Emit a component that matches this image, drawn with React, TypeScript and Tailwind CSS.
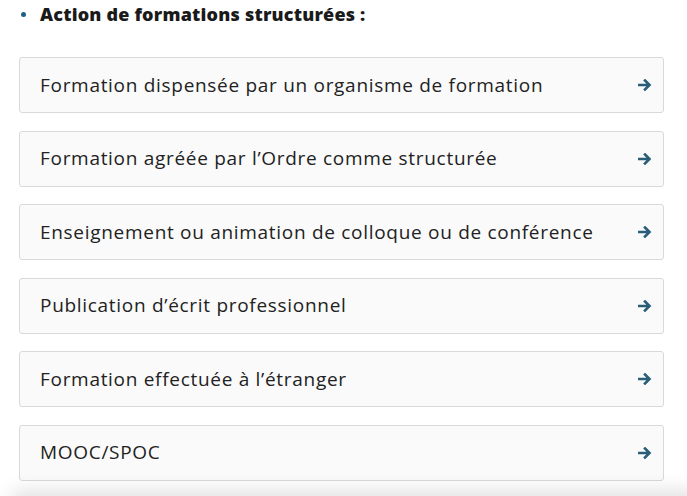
const items = [
  "Formation dispensée par un organisme de formation",
  "Formation agréée par l’Ordre comme structurée",
  "Enseignement ou animation de colloque ou de conférence",
  "Publication d’écrit professionnel",
  "Formation effectuée à l’étranger",
  "MOOC/SPOC",
]

function Arrow() {
  return (
    <svg width="14" height="12" viewBox="0 0 14 12" className="shrink-0">
      <path d="M1 6h10M7 1.5 11.5 6 7 10.5" fill="none" stroke="#2a5d78" strokeWidth="2.6" strokeLinecap="square" />
    </svg>
  )
}

export default function App() {
  return (
    <div className="relative h-[496px] w-[687px] overflow-hidden bg-white" style={{ fontFamily: "'Open Sans', sans-serif" }}>
      <div className="flex items-center pl-[21px] pt-[2px] h-[26px]">
        <span className="w-[5px] h-[5px] rounded-full bg-[#1f5f86]" />
        <span className="ml-[14px] text-[18px] font-extrabold tracking-[0.2px] text-[#1a1a1a]">Action de formations structurées :</span>
      </div>

      <div className="mt-[31px] ml-[19px] w-[645px] flex flex-col gap-[17.5px]">
        {items.map((label) => (
          <button
            key={label}
            className="flex h-[56px] items-center justify-between rounded-[3px] border border-[#d9d9d9] bg-[#fafafa] pl-[20px] pr-[11px] text-left"
          >
            <span className="text-[19px] tracking-[0.7px] text-[#222]">{label}</span>
            <Arrow />
          </button>
        ))}
      </div>

      <div className="absolute left-[10px] right-[-20px] top-[500px] h-[20px] rounded-[12px] shadow-[0_-8px_20px_rgba(0,0,0,0.14)]" />
    </div>
  )
}
